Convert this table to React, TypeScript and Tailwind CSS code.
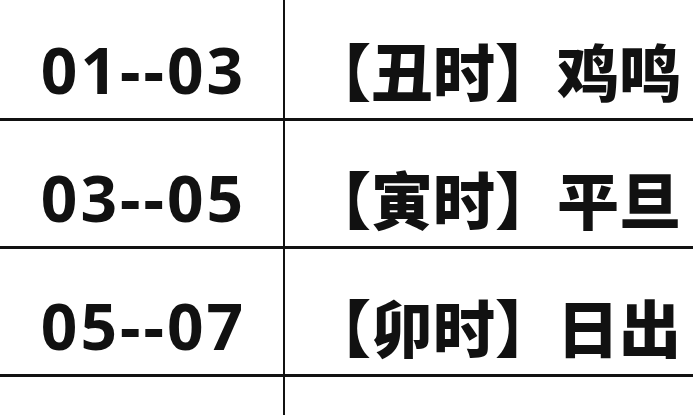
const ROWS = [
  { range: "01--03", name: "【丑时】鸡鸣" },
  { range: "03--05", name: "【寅时】平旦" },
  { range: "05--07", name: "【卯时】日出" },
  { range: "", name: "" },
];

export default function App() {
  return (
    <div className="h-[415px] w-[693px] overflow-hidden bg-white text-[#111]">
      <div className="mt-[-7px]">
        {ROWS.map((r, i) => (
          <div key={i} className="flex h-[128px] border-b-[3px] border-[#111]">
            <div className="flex w-[285px] shrink-0 items-center justify-center border-r-2 border-[#111] pt-[29px] pl-[4px]">
              <span className="font-['Noto_Sans',sans-serif] text-[64px] leading-none font-bold tracking-[3px]">
                {r.range}
              </span>
            </div>
            <div className="flex flex-1 items-center whitespace-nowrap pt-[28px] pl-[24px]">
              <span className="font-['Noto_Sans_CJK_SC',sans-serif] text-[62px] leading-none font-black">
                {r.name}
              </span>
            </div>
          </div>
        ))}
      </div>
    </div>
  );
}
